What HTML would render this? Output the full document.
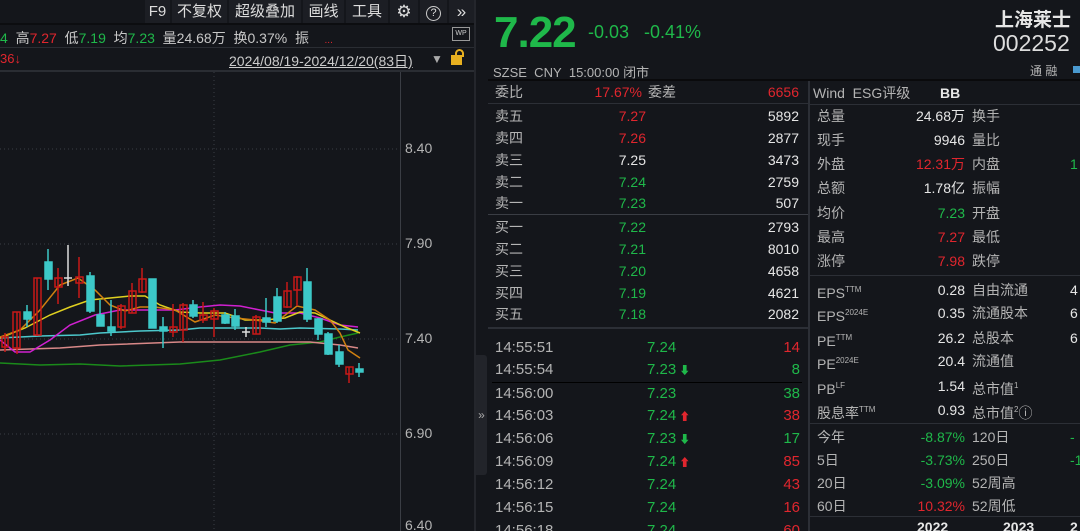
<!DOCTYPE html>
<html style="width:1080px;height:531px;overflow:hidden"><head><meta charset="utf-8">
<style>
*{margin:0;padding:0;box-sizing:border-box}
html,body{overflow:hidden}
body{width:1080px;height:531px;overflow:hidden;background:#14161b;font-family:"Liberation Sans","Noto Sans CJK SC",sans-serif;color:#c8c8c8;position:relative;font-size:14px}
.a{position:absolute;white-space:nowrap}
.g{color:#1fb84a}.r{color:#e0262e}.w{color:#e6e6e6}.l{color:#b4b4b4}
.btn{position:absolute;top:0;height:23px;background:#1c1e24;color:#ddd;font-size:15px;line-height:23px;text-align:center}
.row{position:absolute;height:22px;line-height:22px;font-size:14px}
.hl{position:absolute;height:1px;background:#2c2f36}
.rt{position:absolute;text-align:right}
sup{font-size:8px;vertical-align:6px}
</style></head><body>
<div class="hl" style="left:0;top:23px;width:475px;background:#0c0d10;height:2px"></div>
<div class="btn" style="left:145px;width:25px">F9</div>
<div class="btn" style="left:172px;width:55px">不复权</div>
<div class="btn" style="left:229px;width:72px">超级叠加</div>
<div class="btn" style="left:303px;width:41px">画线</div>
<div class="btn" style="left:346px;width:42px">工具</div>
<div class="btn" style="left:390px;width:28px;font-size:17px">⚙</div>
<div class="btn" style="left:420px;width:27px"><span style="display:inline-block;width:15px;height:15px;border:1.5px solid #ccc;border-radius:50%;font-size:11px;line-height:12px;margin-top:4px">?</span></div>
<div class="btn" style="left:449px;width:25px;font-size:17px">»</div>
<div class="a" style="left:0;top:28px;font-size:14px"><span class="g">4</span>&nbsp; 高<span class="r">7.27</span>&nbsp;&nbsp;低<span class="g">7.19</span>&nbsp;&nbsp;均<span class="g">7.23</span>&nbsp;&nbsp;量24.68万&nbsp;&nbsp;换0.37%&nbsp;&nbsp;振&nbsp;&nbsp;&nbsp;&nbsp;<span class="r" style="font-size:10px">...</span></div>
<div class="a" style="left:452px;top:27px;width:18px;height:14px;border:1px solid #999;font-size:7px;color:#ccc;text-align:center;line-height:12px">WP</div>
<div class="hl" style="left:0;top:47px;width:475px;background:#2a2d33"></div>
<div class="a r" style="left:0;top:51px;font-size:13px">36↓</div>
<div class="a" style="left:229px;top:51px;font-size:14px;color:#ccc;text-decoration:underline">2024/08/19-2024/12/20(83日)</div>
<div class="a" style="left:431px;top:52px;font-size:12px;color:#aaa">▼</div>
<div class="a" style="left:451px;top:55px;width:11px;height:10px;background:#e8b020"></div>
<div class="a" style="left:455px;top:49px;width:9px;height:8px;border:2px solid #e8b020;border-bottom:none;border-radius:5px 5px 0 0"></div>
<div class="hl" style="left:0;top:70px;width:475px;background:#2a2d33;height:2px"></div>
<div class="a" style="left:400px;top:72px;width:1px;height:459px;background:#3a3d44"></div>
<div class="a" style="left:474px;top:0;width:2px;height:531px;background:#24262c"></div>
<svg class="a" style="left:0;top:72px" width="400" height="459">
<g stroke="#3a3d44" stroke-dasharray="1,3" stroke-width="1">
<line x1="0" y1="77" x2="400" y2="77"/><line x1="0" y1="172" x2="400" y2="172"/><line x1="0" y1="267" x2="400" y2="267"/><line x1="0" y1="362" x2="400" y2="362"/><line x1="214" y1="0" x2="214" y2="459"/>
</g></svg>
<div class="a l" style="left:405px;top:140px;font-size:14px">8.40</div>
<div class="a l" style="left:405px;top:235px;font-size:14px">7.90</div>
<div class="a l" style="left:405px;top:330px;font-size:14px">7.40</div>
<div class="a l" style="left:405px;top:425px;font-size:14px">6.90</div>
<div class="a l" style="left:405px;top:517px;font-size:14px">6.40</div>
<svg class="a" style="left:0;top:0" width="400" height="531">
<g fill="none" stroke-width="1.5">
<polyline stroke="#1a8a1a" points="0,363 40,365 80,364 120,366 180,364 220,360 260,352 290,345 320,342 340,337 358,333"/>
<polyline stroke="#d88888" points="0,350 30,349 60,348 100,345 180,342 260,342 310,342 340,345 358,348"/>
<polyline stroke="#4cc8cc" points="0,338 40,336 80,335 100,333 140,331 180,330 200,328 260,328 280,329 300,328 340,329 358,330"/>
<polyline stroke="#d020d0" points="0,340 15,352 30,352 50,340 70,325 95,315 120,310 150,310 175,310 200,307 220,305 240,306 260,310 275,313 300,313 320,318 340,325 358,327"/>
<polyline stroke="#e0d020" points="0,338 25,328 50,315 70,307 90,300 110,298 130,296 145,296 160,305 180,312 200,313 225,313 245,320 265,320 285,318 300,312 315,313 330,320 345,327 360,333"/>
<polyline stroke="#d08010" points="0,337 20,330 40,310 60,285 78,278 95,290 110,305 125,311 140,307 155,307 175,310 195,322 215,315 235,318 255,320 275,323 297,306 315,310 330,320 340,333 348,350 360,358"/>
</g>
<g stroke="#c81818" fill="none" stroke-width="1.5">
<line x1="5" y1="333" x2="5" y2="352"/><rect x="2" y="337" width="6" height="10"/>
<line x1="17" y1="312" x2="17" y2="354"/><rect x="13" y="312" width="7" height="36"/>
<line x1="37" y1="278" x2="37" y2="336"/><rect x="34" y="278" width="7" height="57"/>
<line x1="58" y1="268" x2="58" y2="304"/><rect x="55" y="278" width="7" height="9"/>
<line x1="79" y1="257" x2="79" y2="298"/><rect x="76" y="277" width="7" height="6"/>
<line x1="121" y1="304" x2="121" y2="329"/><rect x="118" y="306" width="7" height="21"/>
<line x1="132" y1="283" x2="132" y2="313"/><rect x="129" y="291" width="7" height="22"/>
<line x1="142" y1="268" x2="142" y2="293"/><rect x="139" y="279" width="7" height="13"/>
<line x1="173" y1="304" x2="173" y2="337"/><rect x="170" y="327" width="7" height="5"/>
<line x1="183" y1="303" x2="183" y2="342"/><rect x="180" y="305" width="7" height="25"/>
<line x1="203" y1="302" x2="203" y2="323"/><rect x="200" y="315" width="7" height="5"/>
<line x1="214" y1="308" x2="214" y2="337"/><rect x="211" y="311" width="7" height="8"/>
<line x1="256" y1="315" x2="256" y2="334"/><rect x="253" y="317" width="7" height="17"/>
<line x1="287" y1="282" x2="287" y2="308"/><rect x="284" y="291" width="7" height="16"/>
<line x1="297" y1="276" x2="297" y2="306"/><rect x="294" y="277" width="7" height="13"/>
<line x1="349" y1="367" x2="349" y2="383"/><rect x="346" y="367" width="7" height="7"/>
</g>
<g stroke="#3cc8c8" fill="#3cc8c8" stroke-width="1.5">
<line x1="27" y1="305" x2="27" y2="327"/><rect x="24" y="312" width="7" height="7"/>
<line x1="48" y1="249" x2="48" y2="290"/><rect x="45" y="262" width="7" height="17"/>
<line x1="90" y1="272" x2="90" y2="313"/><rect x="87" y="276" width="7" height="35"/>
<line x1="100" y1="300" x2="100" y2="326"/><rect x="97" y="315" width="7" height="11"/>
<line x1="111" y1="300" x2="111" y2="336"/><rect x="108" y="327" width="7" height="4"/>
<line x1="152" y1="279" x2="152" y2="328"/><rect x="149" y="279" width="7" height="49"/>
<line x1="163" y1="317" x2="163" y2="348"/><rect x="160" y="327" width="7" height="4"/>
<line x1="193" y1="300" x2="193" y2="318"/><rect x="190" y="305" width="7" height="11"/>
<line x1="225" y1="312" x2="225" y2="324"/><rect x="222" y="315" width="7" height="8"/>
<line x1="235" y1="309" x2="235" y2="330"/><rect x="232" y="316" width="7" height="10"/>
<line x1="266" y1="298" x2="266" y2="327"/><rect x="263" y="318" width="7" height="4"/>
<line x1="277" y1="288" x2="277" y2="323"/><rect x="274" y="297" width="7" height="24"/>
<line x1="307" y1="268" x2="307" y2="322"/><rect x="304" y="282" width="7" height="37"/>
<line x1="318" y1="318" x2="318" y2="340"/><rect x="315" y="319" width="7" height="15"/>
<line x1="328" y1="332" x2="328" y2="355"/><rect x="325" y="334" width="7" height="20"/>
<line x1="339" y1="345" x2="339" y2="367"/><rect x="336" y="352" width="7" height="12"/>
<line x1="359" y1="363" x2="359" y2="377"/><rect x="356" y="369" width="7" height="3"/>
</g>
<g stroke="#ddd" stroke-width="1.5">
<line x1="68" y1="245" x2="68" y2="286"/><line x1="64" y1="278" x2="72" y2="278"/>
<line x1="246" y1="327" x2="246" y2="337"/><line x1="242" y1="332" x2="250" y2="332"/>
</g>
</svg>
<div class="a" style="left:476px;top:355px;width:11px;height:120px;background:#22242a;border-radius:0 3px 3px 0;color:#aaa;font-size:12px;line-height:120px;text-align:center">»</div>
<div class="a" style="left:808px;top:80px;width:2px;height:451px;background:#2c2f36"></div>
<div class="a g" style="left:494px;top:8px;font-size:44px;font-weight:bold;letter-spacing:-1px">7.22</div>
<div class="a g" style="left:588px;top:22px;font-size:18px">-0.03&nbsp;&nbsp; -0.41%</div>
<div class="a w" style="left:995px;top:5px;font-size:19px;font-weight:bold">上海莱士</div>
<div class="a" style="left:993px;top:30px;font-size:23px;color:#ddd">002252</div>
<div class="a l" style="left:1030px;top:62px;font-size:12px">通 融</div>
<div class="a" style="left:1073px;top:66px;width:7px;height:7px;background:#4a9ad0"></div>
<div class="a l" style="left:493px;top:62px;font-size:13px">SZSE&nbsp; CNY&nbsp; 15:00:00 闭市</div>
<div class="hl" style="left:488px;top:79px;width:592px;background:#0a0a0c;height:2px"></div>
<div id="mid"></div>
<div id="rp"></div>
<script>
var m=document.getElementById('mid'),h='';
function row(y,a,b,bc,c,cc){h+='<div class="row l" style="left:495px;top:'+(y-11)+'px">'+a+'</div><div class="row rt '+bc+'" style="left:560px;width:86px;top:'+(y-11)+'px">'+b+'</div><div class="row rt '+cc+'" style="left:700px;width:99px;top:'+(y-11)+'px">'+c+'</div>';}
h+='<div class="row l" style="left:495px;top:81px">委比</div><div class="row rt r" style="left:560px;width:82px;top:81px">17.67%</div><div class="row l" style="left:648px;top:81px">委差</div><div class="row rt r" style="left:700px;width:99px;top:81px">6656</div>';
h+='<div class="hl" style="left:488px;top:103px;width:320px"></div>';
var s=[['卖五','7.27','r','5892'],['卖四','7.26','r','2877'],['卖三','7.25','w','3473'],['卖二','7.24','g','2759'],['卖一','7.23','g','507']];
var ys=[116,138,160,182,203];
s.forEach(function(v,i){row(ys[i],v[0],v[1],v[2],v[3],'w')});
h+='<div class="hl" style="left:488px;top:214px;width:320px;background:#3a3d44"></div>';
var b=[['买一','7.22','g','2793'],['买二','7.21','g','8010'],['买三','7.20','g','4658'],['买四','7.19','g','4621'],['买五','7.18','g','2082']];
var yb=[227,249,271,293,314];
b.forEach(function(v,i){row(yb[i],v[0],v[1],v[2],v[3],'w')});
h+='<div class="hl" style="left:488px;top:327px;width:320px;background:#2c2f36;height:2px"></div>';
var dn='<span style="color:#1fb84a;font-size:11px"> ⬇</span>',up='<span style="color:#e0262e;font-size:11px"> ⬆</span>';
var t=[['14:55:51','7.24','','14','r'],['14:55:54','7.23',dn,'8','g'],['14:56:00','7.23','','38','g'],['14:56:03','7.24',up,'38','r'],['14:56:06','7.23',dn,'17','g'],['14:56:09','7.24',up,'85','r'],['14:56:12','7.24','','43','r'],['14:56:15','7.24','','16','r'],['14:56:18','7.24','','60','r']];
var yt=[348,370,394,416,439,462,485,508,531];
t.forEach(function(v,i){h+='<div class="row l" style="left:495px;top:'+(yt[i]-11)+'px;font-size:15px">'+v[0]+'</div><div class="row g" style="left:647px;top:'+(yt[i]-11)+'px;font-size:15px">'+v[1]+v[2]+'</div><div class="row rt '+v[4]+'" style="left:700px;width:100px;top:'+(yt[i]-11)+'px;font-size:15px">'+v[3]+'</div>';});
h+='<div class="hl" style="left:492px;top:382px;width:310px;background:#000"></div>';
m.innerHTML=h;
var r=document.getElementById('rp');h='';
h+='<div class="row l" style="left:813px;top:82px">Wind&nbsp; ESG评级</div><div class="row w" style="left:940px;top:82px;font-weight:bold">BB</div>';
h+='<div class="hl" style="left:810px;top:104px;width:270px"></div>';
function rr(y,a,b,bc,c,d,dc){h+='<div class="row l" style="left:817px;top:'+(y-11)+'px">'+a+'</div><div class="row rt '+bc+'" style="left:850px;width:115px;top:'+(y-11)+'px">'+b+'</div><div class="row l" style="left:972px;top:'+(y-11)+'px">'+c+'</div><div class="row '+dc+'" style="left:1070px;top:'+(y-11)+'px">'+(d||'')+'</div>';}
var R=[['总量','24.68万','w','换手'],['现手','9946','w','量比'],['外盘','12.31万','r','内盘','1','g'],['总额','1.78亿','w','振幅'],['均价','7.23','g','开盘'],['最高','7.27','r','最低'],['涨停','7.98','r','跌停']];
var yr=[116,140,164,188,213,237,261];
R.forEach(function(v,i){rr(yr[i],v[0],v[1],v[2],v[3],v[4],v[5]||'w')});
h+='<div class="hl" style="left:810px;top:275px;width:270px"></div>';
var E=[['EPS<sup>TTM</sup>','0.28','自由流通','4'],['EPS<sup>2024E</sup>','0.35','流通股本','6'],['PE<sup>TTM</sup>','26.2','总股本','6'],['PE<sup>2024E</sup>','20.4','流通值'],['PB<sup>LF</sup>','1.54','总市值<sup>1</sup>'],['股息率<sup>TTM</sup>','0.93','总市值<sup>2</sup>ⓘ']];
var ye=[290,313,338,361,386,410];
E.forEach(function(v,i){rr(ye[i],v[0],v[1],'w',v[2],v[3],'w')});
h+='<div class="hl" style="left:810px;top:423px;width:270px"></div>';
var P=[['今年','-8.87%','g','120日','-','g'],['5日','-3.73%','g','250日','-1','g'],['20日','-3.09%','g','52周高'],['60日','10.32%','r','52周低']];
var yp=[437,460,483,506];
P.forEach(function(v,i){rr(yp[i],v[0],v[1],v[2],v[3],v[4],v[5]||'w')});
h+='<div class="hl" style="left:810px;top:516px;width:270px"></div>';
h+='<div class="row w" style="left:917px;top:516px;font-weight:bold">2022</div><div class="row w" style="left:1003px;top:516px;font-weight:bold">2023</div><div class="row w" style="left:1070px;top:516px;font-weight:bold">2</div>';
r.innerHTML=h;
</script>
</body></html>
